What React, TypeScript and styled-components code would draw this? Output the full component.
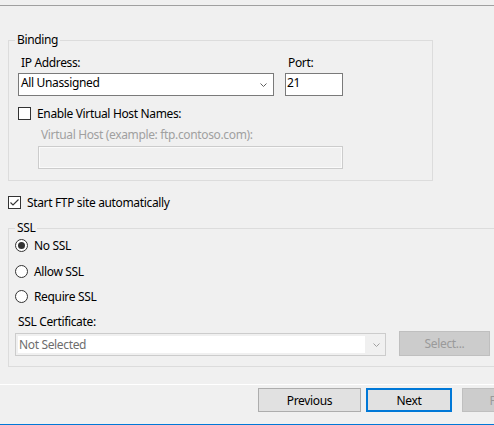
import React from "react";
import styled, { createGlobalStyle } from "styled-components";

const Global = createGlobalStyle`
  html, body { margin: 0; padding: 0; background: #f0f0f0; overflow: hidden; }
  body { font-family: "Noto Sans", "Segoe UI", sans-serif; font-size: 12px; letter-spacing: -0.35px; color: #000; }
  * { box-sizing: border-box; }
`;

const Window = styled.div`
  width: 494px;
  height: 425px;
  overflow: hidden;
  background: #f0f0f0;
  border-bottom: 1px solid #0078d7;
  display: flex;
  flex-direction: column;
  line-height: 15px;
`;

const HeaderEdge = styled.div`
  height: 6px;
  flex: none;
  border-bottom: 1px solid #a0a0a0;
`;

const Content = styled.div`
  padding-left: 8px;
  display: flex;
  flex-direction: column;
  align-items: flex-start;
  flex: none;
`;

const Group = styled.div<{ $top: number; $width: number }>`
  position: relative;
  margin-top: ${(p) => p.$top}px;
  width: ${(p) => p.$width}px;
  flex: none;
  border: 1px solid #dcdcdc;
  display: flex;
  flex-direction: column;
  align-items: flex-start;
`;

const BindingGroup = styled(Group)`
  padding: 14px 0 11px 9px;
`;

const SslGroup = styled(Group)`
  padding: 9px 0 10px 6px;
`;

const GroupTitle = styled.span`
  position: absolute;
  top: -9px;
  left: 6px;
  padding: 0 2px;
  background: #f0f0f0;
  white-space: nowrap;
`;

const FieldGrid = styled.div`
  display: grid;
  grid-template-columns: 256px 58px;
  column-gap: 11px;
  row-gap: 3px;
`;

const Label = styled.div<{ $disabled?: boolean; $indent?: number; $top?: number }>`
  padding-left: ${(p) => p.$indent ?? 3}px;
  margin-top: ${(p) => p.$top ?? 0}px;
  color: ${(p) => (p.$disabled ? "#a0a0a0" : "#000")};
  white-space: nowrap;
  height: 15px;
`;

const ComboBox = styled.div<{ $width: number }>`
  width: ${(p) => p.$width}px;
  height: 23px;
  border: 1px solid #7a7a7a;
  background: #fff;
  display: flex;
  align-items: flex-start;
  padding: 1px 6px 0 2px;
`;

const ComboText = styled.span`
  flex: 1;
  white-space: nowrap;
`;

const ChevronBox = styled.span`
  height: 21px;
  margin-top: -1px;
  display: flex;
  align-items: center;
`;

const TextInput = styled.div`
  height: 23px;
  border: 1px solid #7a7a7a;
  background: #fff;
  padding: 1px 0 0 1px;
`;

const CheckRow = styled.div<{ $top: number; $indent?: number }>`
  display: flex;
  align-items: center;
  gap: 6px;
  height: 15px;
  margin-top: ${(p) => p.$top}px;
  margin-left: ${(p) => p.$indent ?? 0}px;
  white-space: nowrap;
`;

const CheckBox = styled.span`
  width: 13px;
  height: 13px;
  flex: none;
  border: 1px solid #333;
  background: #fff;
  display: flex;
`;

const Radio = styled.span`
  width: 13px;
  height: 13px;
  flex: none;
  border: 1px solid #333;
  border-radius: 50%;
  background: #fff;
  display: flex;
  align-items: center;
  justify-content: center;
`;

const RadioDot = styled.span`
  width: 7px;
  height: 7px;
  border-radius: 50%;
  background: #333;
`;

const VirtualHost = styled.div`
  margin-left: 20px;
  display: flex;
  flex-direction: column;
`;

const DisabledInput = styled.div`
  width: 305px;
  height: 23px;
  margin-top: 4px;
  border: 1px solid #cccccc;
  box-shadow: inset 0 0 0 1px #fafafa;
  background: #f0f0f0;
`;

const RadioList = styled.div`
  display: flex;
  flex-direction: column;
  gap: 10.5px;
`;

const CertRow = styled.div`
  display: flex;
  align-items: flex-end;
  gap: 13px;
  margin-top: 2px;
`;

const DisabledCombo = styled.div`
  width: 371px;
  height: 23px;
  border: 1px solid #cccccc;
  background: #f0f0f0;
  padding: 2px 0 2px 2px;
  display: flex;
`;

const DisabledField = styled.div`
  flex: 1;
  background: #fff;
  color: #6d6d6d;
  padding-left: 1px;
  line-height: 17px;
  white-space: nowrap;
`;

const ArrowArea = styled.div`
  width: 20px;
  display: flex;
  align-items: center;
  justify-content: center;
  padding-left: 3px;
`;

const Button = styled.div<{ $width: number; $variant?: "default" | "focused" | "disabled"; $height?: number }>`
  width: ${(p) => p.$width}px;
  height: ${(p) => p.$height ?? 24}px;
  flex: none;
  display: flex;
  align-items: center;
  justify-content: center;
  white-space: nowrap;
  background: ${(p) => (p.$variant === "disabled" ? "#cccccc" : "#e1e1e1")};
  color: ${(p) => (p.$variant === "disabled" ? "#9a9a9a" : "#000")};
  border: ${(p) =>
    p.$variant === "focused"
      ? "2px solid #0078d7"
      : p.$variant === "disabled"
      ? "1px solid #bfbfbf"
      : "1px solid #adadad"};
`;

const Separator = styled.div`
  height: 1px;
  flex: none;
  margin-top: 17px;
  background: #ffffff;
`;

const Footer = styled.div`
  display: flex;
  margin-top: 3px;
  padding-left: 258px;
  flex: none;
`;

const Chevron = ({ color }: { color: string }) => (
  <svg width="7" height="4" viewBox="0 0 7 4">
    <polyline points="0.5,0.5 3.5,3.5 6.5,0.5" fill="none" stroke={color} strokeWidth="1" />
  </svg>
);

const Check = () => (
  <svg width="11" height="11" viewBox="0 0 11 11">
    <polyline points="1.5,5.5 4,8 9.5,2.5" fill="none" stroke="#333" strokeWidth="1.1" />
  </svg>
);

export default function App() {
  return (
    <>
      <Global />
      <Window>
        <HeaderEdge />
        <Content>
          <BindingGroup $top={34} $width={425}>
            <GroupTitle>Binding</GroupTitle>
            <FieldGrid>
              <Label>IP Address:</Label>
              <Label>Port:</Label>
              <ComboBox $width={256}>
                <ComboText>All Unassigned</ComboText>
                <ChevronBox>
                  <Chevron color="#606060" />
                </ChevronBox>
              </ComboBox>
              <TextInput>21</TextInput>
            </FieldGrid>
            <CheckRow $top={10}>
              <CheckBox />
              <span>Enable Virtual Host Names:</span>
            </CheckRow>
            <VirtualHost>
              <Label $disabled $top={6}>Virtual Host (example: ftp.contoso.com):</Label>
              <DisabledInput />
            </VirtualHost>
          </BindingGroup>

          <CheckRow $top={14}>
            <CheckBox>
              <Check />
            </CheckBox>
            <span>Start FTP site automatically</span>
          </CheckRow>

          <SslGroup $top={18} $width={560}>
            <GroupTitle>SSL</GroupTitle>
            <RadioList>
              <CheckRow $top={0}>
                <Radio>
                  <RadioDot />
                </Radio>
                <span>No SSL</span>
              </CheckRow>
              <CheckRow $top={0}>
                <Radio />
                <span>Allow SSL</span>
              </CheckRow>
              <CheckRow $top={0}>
                <Radio />
                <span>Require SSL</span>
              </CheckRow>
            </RadioList>
            <Label $top={10}>SSL Certificate:</Label>
            <CertRow>
              <DisabledCombo>
                <DisabledField>Not Selected</DisabledField>
                <ArrowArea>
                  <Chevron color="#a0a0a0" />
                </ArrowArea>
              </DisabledCombo>
              <Button $width={91} $height={25} $variant="disabled">Select...</Button>
            </CertRow>
          </SslGroup>
        </Content>
        <Separator />
        <Footer>
          <Button $width={103}>Previous</Button>
          <Button $width={86} $variant="focused" style={{ marginLeft: 5 }}>Next</Button>
          <Button $width={86} $variant="disabled" style={{ marginLeft: 10 }}>Finish</Button>
        </Footer>
      </Window>
    </>
  );
}
